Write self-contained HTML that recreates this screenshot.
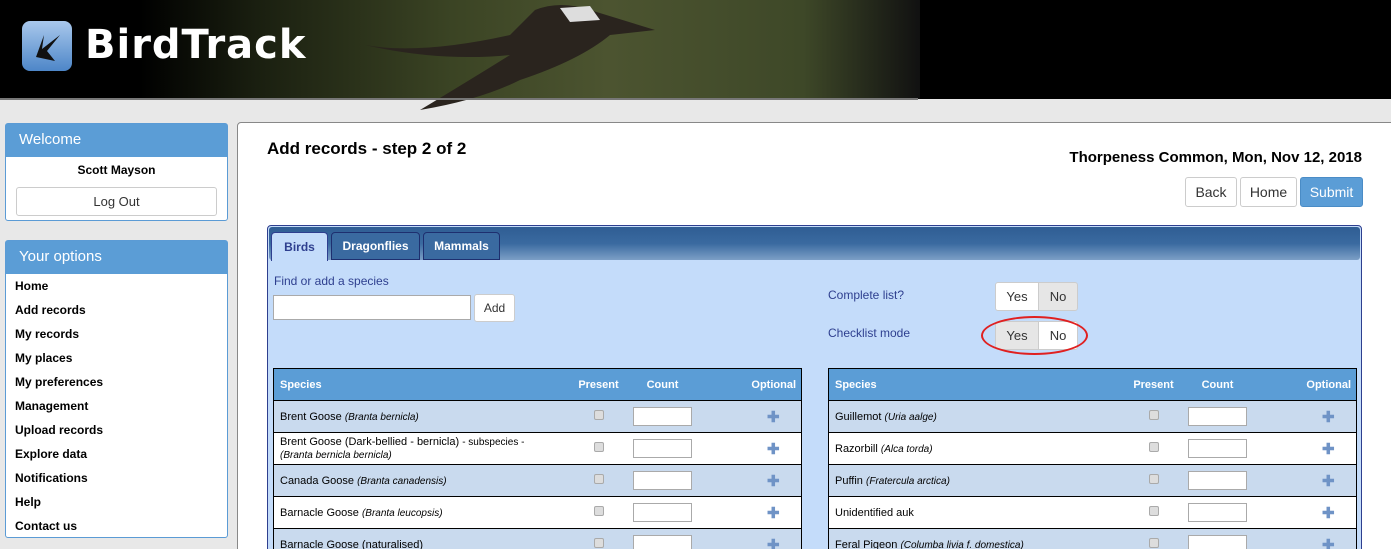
<!DOCTYPE html>
<html><head><style>
*{box-sizing:border-box}
html,body{margin:0;width:1391px;height:549px;overflow:hidden}
body{background:#e8e8e8;font-family:"Liberation Sans",Arial,sans-serif;font-size:12px;position:relative}
.hdr{position:absolute;left:0;top:0;width:1391px;height:99px;background:#000}
.grass{position:absolute;left:140px;top:0;width:780px;height:99px;background:linear-gradient(90deg,#000 0%,#1a1f10 15%,#3b4424 40%,#4c5430 60%,#3e4828 85%,#111 100%)}
.hline{position:absolute;left:0;top:98px;width:918px;height:2px;background:#777}
.logo{position:absolute;left:22px;top:21px;width:50px;height:50px;border-radius:8px;background:linear-gradient(#a9c8ec,#4d86c8);}
.brand{position:absolute;left:85px;top:22px;color:#fff;font-size:40px;font-weight:bold;font-family:"DejaVu Sans",sans-serif;letter-spacing:1px}
.panel{position:absolute;left:5px;width:223px;background:#fff;border:1px solid #5b9bd5;border-radius:3px}
.ph{background:#5b9dd6;color:#fff;font-size:15px;padding:7px 13px;height:33px}
.main{position:absolute;left:237px;top:122px;width:1160px;height:440px;background:#fff;border:1px solid #888;border-radius:4px}
.abs{position:absolute}
.btn{position:absolute;border:1px solid #ccc;border-radius:3px;background:#fff;text-align:center;font-size:14px;color:#333}
table{border-collapse:collapse;position:absolute;font-size:11px;table-layout:fixed}
td,th{height:32px;border-top:1px solid #000;padding:0 6px;overflow:hidden;white-space:nowrap}
th{background:#5b9dd6;color:#fff;font-weight:bold;text-align:left}
tr.a td{background:#c9daee}
tr.b td{background:#fff}
.cb{display:inline-block;width:10px;height:10px;border:1px solid #aaa;border-radius:2px;background:#ddd}
.in{display:inline-block;width:59px;height:19px;border:1px solid #aaa;background:#fff;vertical-align:middle}
.pl{color:#6f93c6;font-size:15px;font-weight:bold}
.nav div{font-size:12px;font-weight:bold;height:24px;line-height:24px;padding-left:9px}
td.o{text-align:center;padding-left:52px;padding-right:0}
td.c{text-align:center;padding:0}
</style></head><body>
<div class="hdr"><div class="grass"></div>
<svg class="abs" style="left:360px;top:0" width="300" height="112"><path d="M5 45 Q60 55 150 35 L175 10 Q200 0 230 10 L295 30 L250 35 Q220 60 160 80 Q120 100 60 110 Q110 80 150 55 Q80 62 5 45Z" fill="#2a241e"/><path d="M200 8 L230 6 L240 20 L210 22Z" fill="#ddd"/></svg>
<div class="logo"><svg width="50" height="50"><path d="M14 36 L22 14 L20 28 L38 14 L25 30 L33 40 Z" fill="#111"/></svg></div>
<div class="brand">BirdTrack</div></div>
<div class="hline"></div>
<div class="panel" style="top:123px;height:98px"><div class="ph">Welcome</div>
<div style="text-align:center;font-weight:bold;font-size:12px;margin-top:6px">Scott Mayson</div>
<div class="btn" style="left:10px;top:63px;width:201px;height:29px;line-height:27px;font-size:13px">Log Out</div></div>
<div class="panel" style="top:240px;height:298px"><div class="ph">Your options</div>
<div class="nav"><div>Home</div><div>Add records</div><div>My records</div><div>My places</div><div>My preferences</div><div>Management</div><div>Upload records</div><div>Explore data</div><div>Notifications</div><div>Help</div><div>Contact us</div></div></div>
<div class="main"></div>
<div class="abs" style="left:267px;top:139px;font-size:17px;font-weight:bold">Add records - step 2 of 2</div>
<div class="abs" style="right:29px;top:149px;font-size:15px;font-weight:bold">Thorpeness Common, Mon, Nov 12, 2018</div>
<div class="btn" style="left:1185px;top:177px;width:52px;height:30px;line-height:28px">Back</div>
<div class="btn" style="left:1240px;top:177px;width:57px;height:30px;line-height:28px">Home</div>
<div class="btn" style="left:1300px;top:177px;width:63px;height:30px;line-height:28px;background:#5b9dd6;border-color:#4a8cc6;color:#fff">Submit</div>
<div class="abs" style="left:267px;top:225px;width:1095px;height:330px;background:#c4dcfa;border:1px solid #2e3f8f;border-radius:4px"></div>
<div class="abs" style="left:269px;top:227px;width:1091px;height:33px;background:linear-gradient(#2f5d93,#3a6aa0 50%,#7c9fc6);border-radius:3px"></div>
<div class="abs" style="left:271px;top:232px;width:57px;height:29px;background:#c4dcfa;border:1px solid #2e3f8f;border-bottom:none;border-radius:4px 4px 0 0;color:#2e3f8f;font-weight:bold;text-align:center;line-height:28px">Birds</div>
<div class="abs" style="left:331px;top:232px;width:89px;height:28px;background:#3a6aa0;border:1px solid #1e2f6f;border-radius:4px 4px 0 0;color:#fff;font-weight:bold;text-align:center;line-height:27px">Dragonflies</div>
<div class="abs" style="left:423px;top:232px;width:77px;height:28px;background:#3a6aa0;border:1px solid #1e2f6f;border-radius:4px 4px 0 0;color:#fff;font-weight:bold;text-align:center;line-height:27px">Mammals</div>
<div class="abs" style="left:274px;top:274px;color:#2e3f8f">Find or add a species</div>
<div class="abs" style="left:273px;top:295px;width:198px;height:25px;background:#fff;border:1px solid #aaa"></div>
<div class="btn" style="left:474px;top:294px;width:41px;height:28px;line-height:26px;font-size:12px">Add</div>
<div class="abs" style="left:828px;top:288px;color:#2e3f8f">Complete list?</div>
<div class="abs" style="left:828px;top:326px;color:#2e3f8f">Checklist mode</div>
<div class="btn" style="left:995px;top:282px;width:44px;height:29px;line-height:27px;border-radius:3px 0 0 3px;font-size:13px">Yes</div>
<div class="btn" style="left:1038px;top:282px;width:40px;height:29px;line-height:27px;border-radius:0 3px 3px 0;font-size:13px;background:#e6e6e6">No</div>
<div class="btn" style="left:995px;top:321px;width:44px;height:29px;line-height:27px;border-radius:3px 0 0 3px;font-size:13px;background:#e6e6e6">Yes</div>
<div class="btn" style="left:1038px;top:321px;width:40px;height:29px;line-height:27px;border-radius:0 3px 3px 0;font-size:13px">No</div>
<div class="abs" style="left:981px;top:316px;width:107px;height:39px;border:2px solid #e02020;border-radius:50%"></div>
<table style="left:273px;top:368px;width:529px;border:1px solid #000">
<colgroup><col style="width:292px"><col style="width:66px"><col style="width:62px"><col></colgroup>
<tr><th>Species</th><th style="text-align:center;padding:0">Present</th><th style="text-align:center;padding:0">Count</th><th style="text-align:right;padding-right:5px">Optional</th></tr>
<tr class="a"><td>Brent Goose <i style="font-size:10px">(Branta bernicla)</i></td><td class="c"><span class="cb"></span></td><td class="c"><span class="in"></span></td><td class="o"><span class="pl">✚</span></td></tr>
<tr class="b"><td style="font-size:11px;line-height:12px">Brent Goose (Dark-bellied - bernicla) <span style="font-size:10px">- subspecies -<br><i>(Branta bernicla bernicla)</i></span></td><td class="c"><span class="cb"></span></td><td class="c"><span class="in"></span></td><td class="o"><span class="pl">✚</span></td></tr>
<tr class="a"><td>Canada Goose <i style="font-size:10px">(Branta canadensis)</i></td><td class="c"><span class="cb"></span></td><td class="c"><span class="in"></span></td><td class="o"><span class="pl">✚</span></td></tr>
<tr class="b"><td>Barnacle Goose <i style="font-size:10px">(Branta leucopsis)</i></td><td class="c"><span class="cb"></span></td><td class="c"><span class="in"></span></td><td class="o"><span class="pl">✚</span></td></tr>
<tr class="a"><td>Barnacle Goose (naturalised)</td><td class="c"><span class="cb"></span></td><td class="c"><span class="in"></span></td><td class="o"><span class="pl">✚</span></td></tr>
</table>
<table style="left:828px;top:368px;width:529px;border:1px solid #000">
<colgroup><col style="width:292px"><col style="width:66px"><col style="width:62px"><col></colgroup>
<tr><th>Species</th><th style="text-align:center;padding:0">Present</th><th style="text-align:center;padding:0">Count</th><th style="text-align:right;padding-right:5px">Optional</th></tr>
<tr class="a"><td>Guillemot <i style="font-size:10px">(Uria aalge)</i></td><td class="c"><span class="cb"></span></td><td class="c"><span class="in"></span></td><td class="o"><span class="pl">✚</span></td></tr>
<tr class="b"><td>Razorbill <i style="font-size:10px">(Alca torda)</i></td><td class="c"><span class="cb"></span></td><td class="c"><span class="in"></span></td><td class="o"><span class="pl">✚</span></td></tr>
<tr class="a"><td>Puffin <i style="font-size:10px">(Fratercula arctica)</i></td><td class="c"><span class="cb"></span></td><td class="c"><span class="in"></span></td><td class="o"><span class="pl">✚</span></td></tr>
<tr class="b"><td>Unidentified auk</td><td class="c"><span class="cb"></span></td><td class="c"><span class="in"></span></td><td class="o"><span class="pl">✚</span></td></tr>
<tr class="a"><td>Feral Pigeon <i style="font-size:10px">(Columba livia f. domestica)</i></td><td class="c"><span class="cb"></span></td><td class="c"><span class="in"></span></td><td class="o"><span class="pl">✚</span></td></tr>
</table>
</body></html>
